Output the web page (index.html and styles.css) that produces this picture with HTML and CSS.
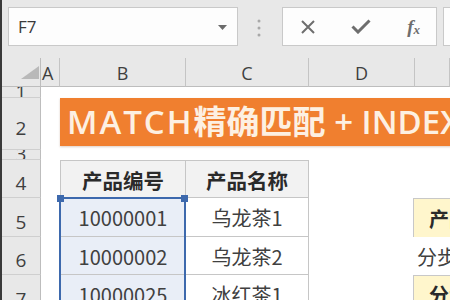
FILE: index.html
```html
<!DOCTYPE html>
<html>
<head>
<meta charset="utf-8">
<link rel="stylesheet" href="styles.css">
</head>
<body>
<div class="app">
  <div class="toolbar">
    <div class="namebox">
      <span class="ref">F7</span>
      <svg class="caret" width="9" height="5" viewBox="0 0 9 5"><path d="M0 0H9L4.5 5Z" fill="#6b6b6b"/></svg>
    </div>
    <svg class="dots" width="4" height="18" viewBox="0 0 4 18"><circle cx="2" cy="2" r="1.5" fill="#a8a8a8"/><circle cx="2" cy="9" r="1.5" fill="#a8a8a8"/><circle cx="2" cy="16" r="1.5" fill="#a8a8a8"/></svg>
    <div class="fbtns">
      <svg width="14" height="14" viewBox="0 0 14 14"><path d="M1 1L13 13M13 1L1 13" stroke="#6e6e6e" stroke-width="2" fill="none"/></svg>
      <svg width="20" height="15" viewBox="0 0 20 15"><path d="M1.5 7.5L7 13L18.5 1.5" stroke="#6e6e6e" stroke-width="3" fill="none"/></svg>
      <span class="fx">f<sub>x</sub></span>
    </div>
    <div class="fbox"></div>
  </div>
  <div class="sheet">
    <div class="corner"><svg width="18" height="13" viewBox="0 0 18 13"><path d="M18 0V13H0Z" fill="#b9b9b9"/></svg></div>
    <div class="ch">A</div>
    <div class="ch">B</div>
    <div class="ch">C</div>
    <div class="ch">D</div>
    <div class="ch"></div>

    <div class="rh r1">1</div>
    <div class="rh r2">2</div>
    <div class="rh r3">3</div>
    <div class="rh r4">4</div>
    <div class="rh r5">5</div>
    <div class="rh r6">6</div>
    <div class="rh r7">7</div>

    <div class="banner"><span class="latin">MATCH</span>精确匹配 + INDEX</div>

    <div class="cell th cb r4">产品编号</div>
    <div class="cell th cc r4">产品名称</div>
    <div class="cell sel cb r5">10000001</div>
    <div class="cell cc r5">乌龙茶1</div>
    <div class="cell sel cb r6">10000002</div>
    <div class="cell cc r6">乌龙茶2</div>
    <div class="cell sel cb r7">10000025</div>
    <div class="cell cc r7">冰红茶1</div>

    <div class="selection"><span class="hdl hl"></span><span class="hdl hr"></span></div>

    <div class="ybox r5">产品</div>
    <div class="note r6">分步</div>
    <div class="ybox r7">分步</div>
  </div>
</div>
</body>
</html>
```

FILE: styles.css
```css
html, body {
  margin: 0;
  padding: 0;
  width: 450px;
  height: 300px;
  overflow: hidden;
  background: #ffffff;
}
.app {
  width: 448px;
  height: 300px;
  border-left: 2px solid #3a3a3a;
  font-family: "Noto Sans CJK SC", "Noto Sans", sans-serif;
  overflow: hidden;
}
.toolbar {
  height: 58px;
  background: #e8e8e8;
  display: flex;
  align-items: flex-start;
  padding-top: 7px;
  box-sizing: border-box;
  white-space: nowrap;
}
.namebox {
  margin-left: 6px;
  width: 230px;
  height: 39px;
  box-sizing: border-box;
  background: #fdfdfd;
  border: 1px solid #c9c9c9;
  display: flex;
  align-items: center;
  padding: 0 10px 0 9px;
  flex-shrink: 0;
}
.ref {
  font-family: "Open Sans", sans-serif;
  font-size: 17px;
  color: #3a3a3a;
  flex: 1;
}
.caret { margin-top: 1px; }
.dots {
  margin: 12px 0 0 19px;
  flex-shrink: 0;
}
.fbtns {
  margin-left: 21px;
  width: 155px;
  height: 39px;
  box-sizing: border-box;
  background: #fdfdfd;
  border: 1px solid #c9c9c9;
  display: flex;
  align-items: center;
  padding: 0 16px 0 18px;
  justify-content: space-between;
  flex-shrink: 0;
}
.fx {
  font-family: "Liberation Serif", serif;
  font-style: italic;
  font-size: 19px;
  color: #6e6e6e;
  font-weight: bold;
  line-height: 1;
}
.fx sub {
  font-size: 13px;
  vertical-align: -1px;
}
.fbox {
  margin-left: 6px;
  width: 40px;
  height: 39px;
  box-sizing: border-box;
  background: #fdfdfd;
  border: 1px solid #c9c9c9;
  flex-shrink: 0;
}
.sheet {
  display: grid;
  grid-template-columns: 39px 19px 126px 123px 106px 1fr;
  grid-template-rows: 29px 11px 52px 10px 38px 39px 38px 39px;
  height: 242px;
}
.corner {
  background: #e8e8e8;
  border-right: 1px solid #bdbdbd;
  border-bottom: 1px solid #bdbdbd;
  display: flex;
  align-items: flex-end;
  justify-content: flex-end;
  padding: 0 1px 7px 0;
}
.ch {
  background: #e8e8e8;
  border-right: 1px solid #c4c4c4;
  border-bottom: 1px solid #bdbdbd;
  display: flex;
  align-items: flex-end;
  justify-content: center;
  font-family: "Open Sans", sans-serif;
  font-size: 18px;
  line-height: 1;
  color: #3f3f3f;
  padding-bottom: 4px;
}
.ch:nth-child(2) { justify-content: flex-start; padding-left: 1px; }
.rh {
  grid-column: 1;
  background: #e8e8e8;
  border-right: 1px solid #bdbdbd;
  border-bottom: 1px solid #cfcfcf;
  display: flex;
  align-items: flex-end;
  justify-content: center;
  font-family: "Open Sans", sans-serif;
  font-size: 19px;
  line-height: 1;
  color: #3f3f3f;
  padding-bottom: 4px;
  overflow: hidden;
}
.rh.r2 { padding-bottom: 11px; }
.rh.r1 { padding-bottom: 0; line-height: 11px; align-items: flex-end; }
.rh.r3 { padding-bottom: 0; line-height: 8px; align-items: flex-start; }
.r1 { grid-row: 2; }
.r2 { grid-row: 3; }
.r3 { grid-row: 4; }
.r4 { grid-row: 5; }
.r5 { grid-row: 6; }
.r6 { grid-row: 7; }
.r7 { grid-row: 8; }
.banner {
  grid-column: 3 / 7;
  grid-row: 3;
  margin: 0 -60px 4px 0;
  background: #f07f2f;
  box-shadow: 0 1px 2px rgba(120, 60, 20, 0.25);
  color: #fdf0e2;
  font-family: "Open Sans", "Noto Sans CJK SC", sans-serif;
  font-size: 33px;
  font-weight: 600;
  line-height: 48px;
  padding-left: 7px;
  white-space: nowrap;
  overflow: hidden;
}
.latin { letter-spacing: 2px; }
.cell {
  border-right: 1px solid #c6c6c6;
  border-bottom: 1px solid #c6c6c6;
  display: flex;
  align-items: center;
  justify-content: center;
  font-size: 20px;
  color: #404040;
  padding-top: 1px;
  box-sizing: border-box;
}
.cb { grid-column: 3; border-left: 1px solid #c6c6c6; }
.cc { grid-column: 4; }
.th {
  background: #f2f2f2;
  font-weight: 700;
  color: #2a2a2a;
  border-top: 1px solid #c6c6c6;
  font-size: 20.5px;
}
.sel { background: #e9eef7; }
.selection {
  grid-column: 3;
  grid-row: 6 / 9;
  margin: -1px 0 0 -1px;
  border: 2px solid #3d69ad;
  border-bottom: none;
  position: relative;
  pointer-events: none;
}
.hdl {
  position: absolute;
  top: -4px;
  width: 7px;
  height: 7px;
  background: #3d69ad;
}
.hl { left: -4px; }
.hr { right: -4px; }
.ybox {
  grid-column: 6;
  margin-left: -2px;
  background: #fff6cc;
  border: 1px solid #c8c8c8;
  border-right: none;
  font-size: 20px;
  font-weight: 700;
  color: #2a2a2a;
  display: flex;
  align-items: center;
  padding-left: 15px;
  white-space: nowrap;
  overflow: hidden;
}
.ybox.r5 { border-bottom: none; }
.note {
  grid-column: 6;
  font-size: 20px;
  color: #404040;
  display: flex;
  align-items: center;
  padding-left: 2px;
  white-space: nowrap;
  overflow: hidden;
}
```
